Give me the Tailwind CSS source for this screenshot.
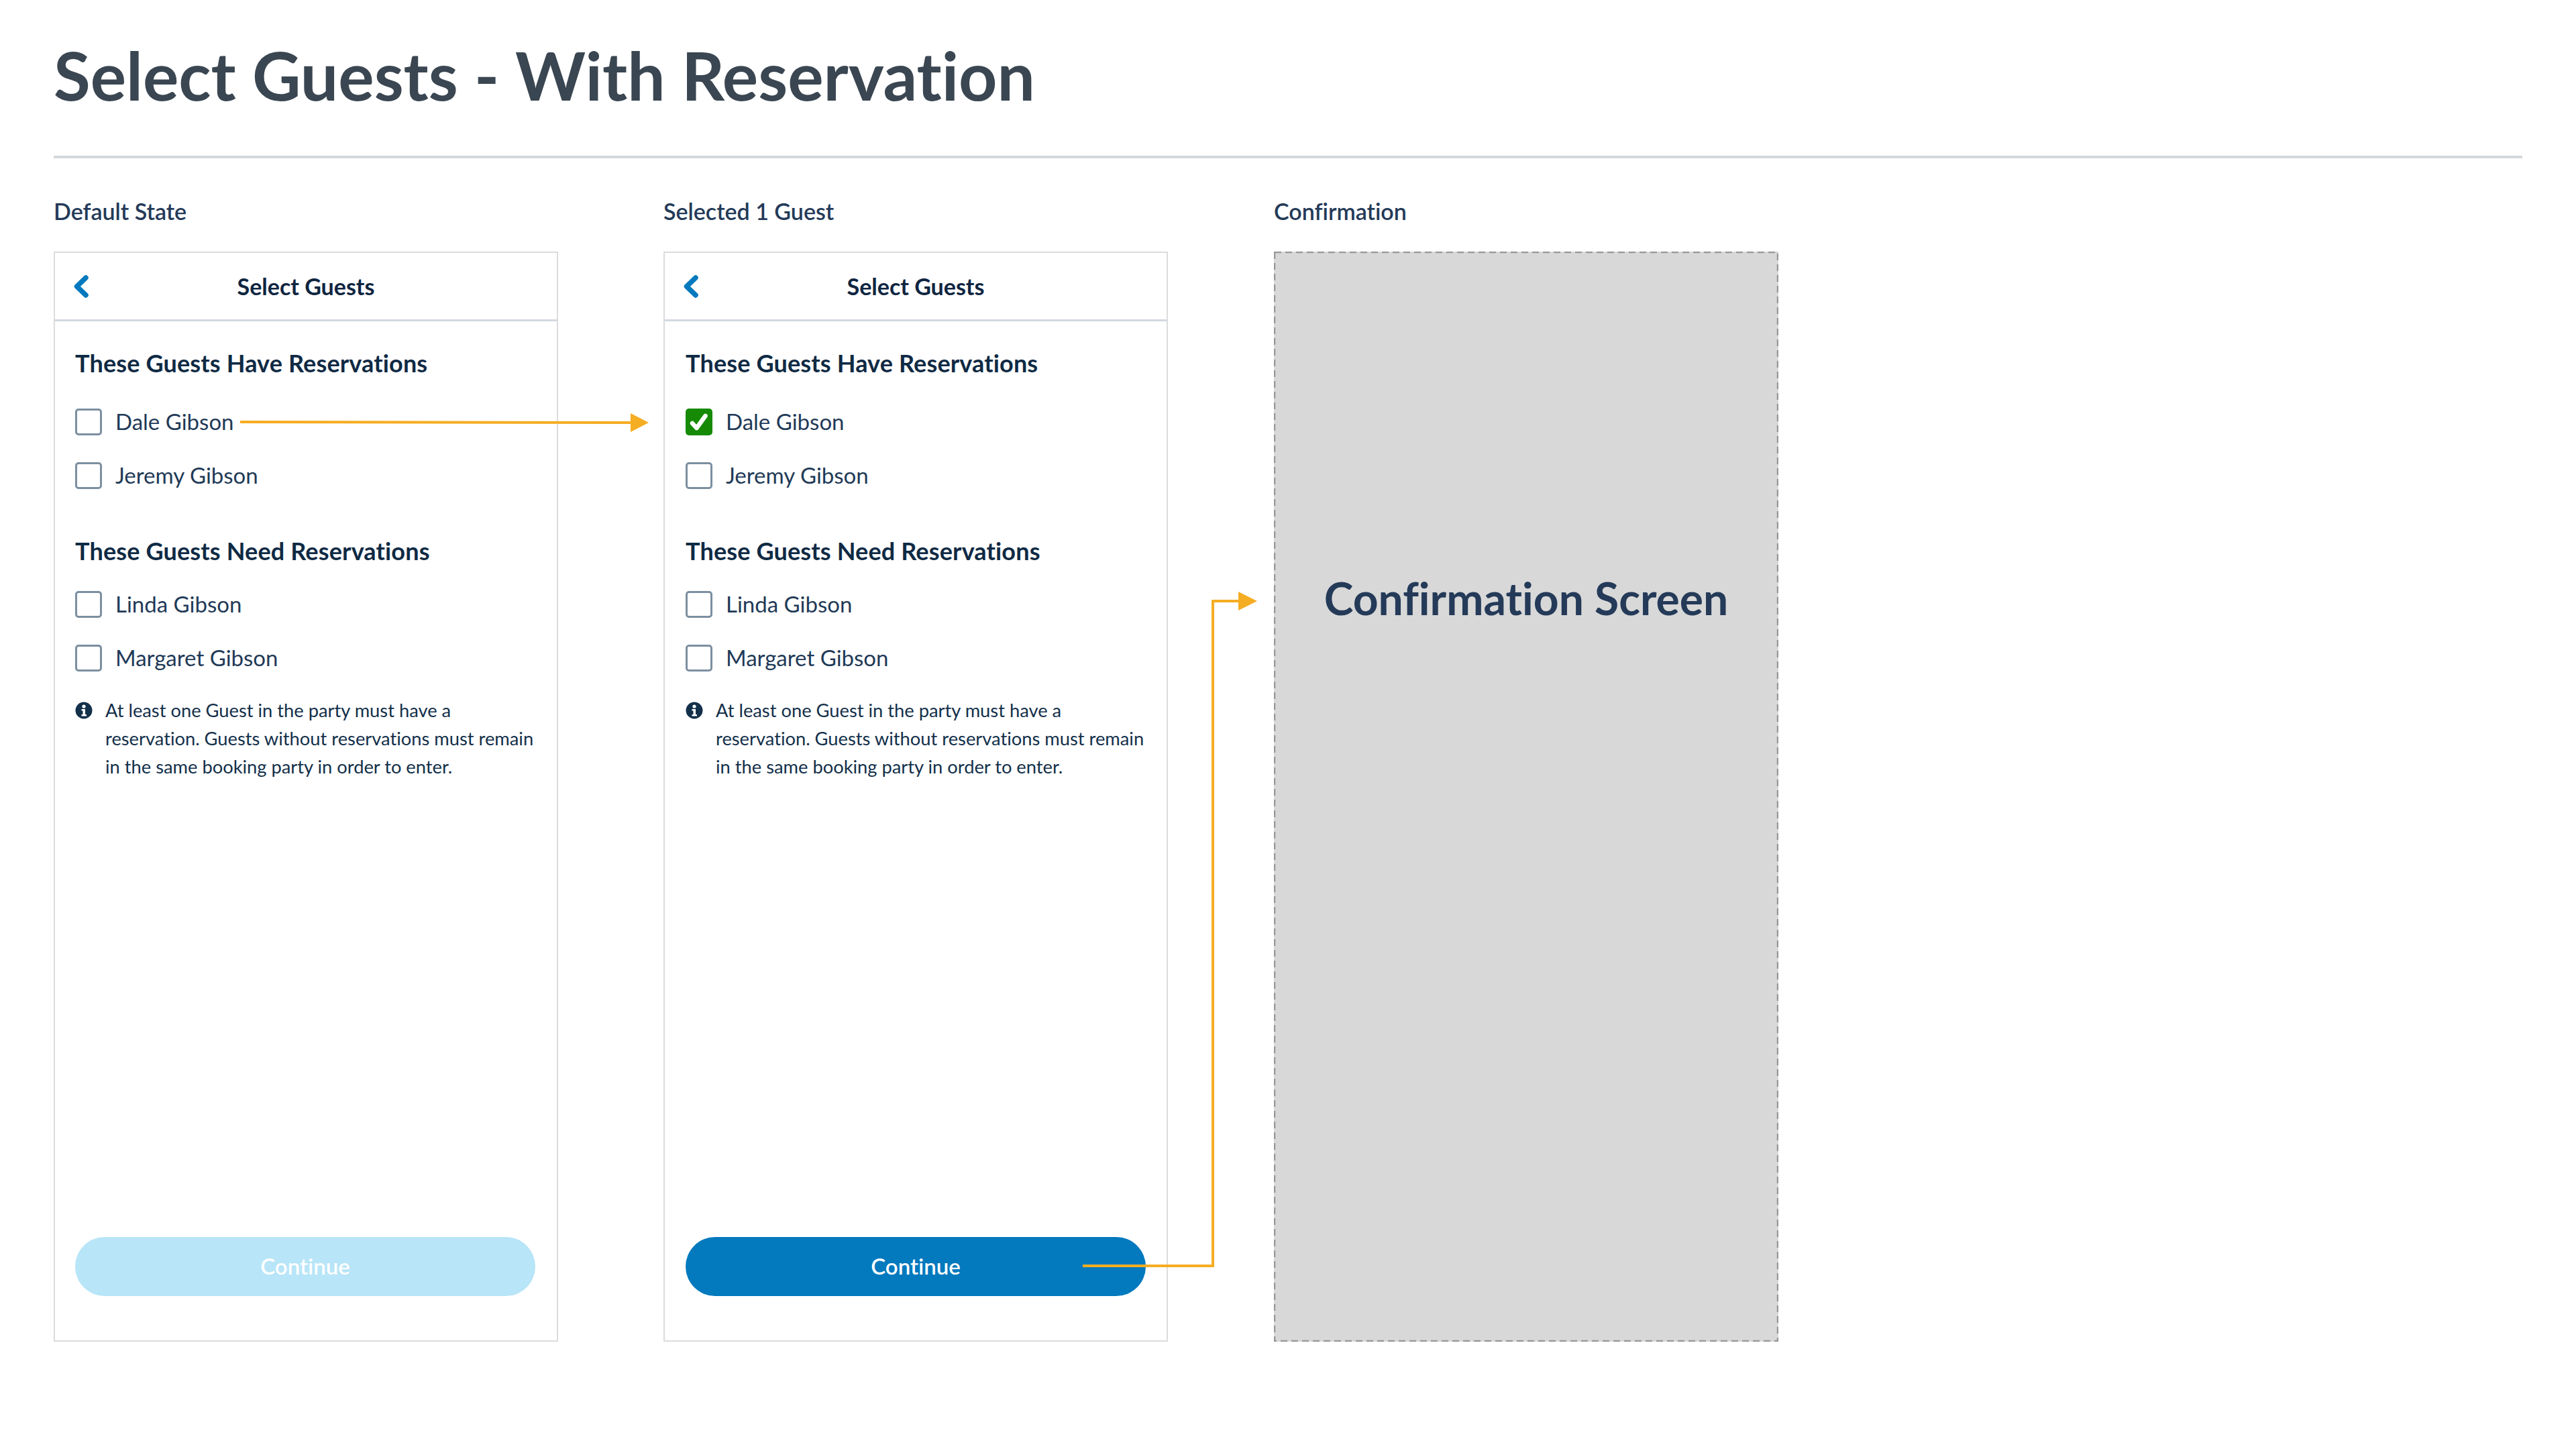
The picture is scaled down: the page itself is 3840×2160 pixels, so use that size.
<!DOCTYPE html>
<html lang="en">
<head>
<meta charset="UTF-8">
<title>Select Guests - With Reservation</title>
<script src="https://cdn.jsdelivr.net/npm/@tailwindcss/browser@4"></script>
</head>
<body class="bg-white font-['Lato',sans-serif] [font-variant-ligatures:none]">
<div class="relative w-[3840px] h-[2160px] px-[80px]">
  <h1 class="h-[232px] pt-[56px] text-[100px] leading-[110px] font-bold text-[#3a4651]">Select Guests - With Reservation</h1>
  <div class="h-[4px] bg-[#d2d8dd]"></div>

  <div class="flex gap-[157px] pt-[59px]">
    <!-- default state -->
    <section class="w-[752px]">
      <h2 class="h-[80px] text-[34px] leading-[40px] font-semibold text-[#243a58]">Default State</h2>
      <div class="w-[752px] h-[1625px] flex flex-col border-2 border-[#dcdcdc]">
        <div class="relative h-[102px] shrink-0 flex items-center justify-center border-b-[3px] border-[#d3d8e0]">
          <svg class="absolute left-[27px] top-[33px]" width="24" height="34" viewBox="0 0 24 34" fill="none"><path d="M19 4 5.500 17 19 30" stroke="#0379be" stroke-width="7.500" stroke-linecap="round" stroke-linejoin="round"/></svg>
          <span class="text-[34px] font-bold text-[#0f2540]">Select Guests</span>
        </div>
        <div class="flex-1 flex flex-col px-[30px]">
          <h3 class="pt-[40px] text-[36px] leading-[44px] font-bold tracking-[0.15px] text-[#0f2a44]">These Guests Have Reservations</h3>
          <div class="flex flex-col gap-[40px] pt-[46px]">
            <label class="flex items-center gap-[20px] h-[40px] text-[33px] text-[#1f3a57]"><span class="w-[40px] h-[40px] rounded-[5px] border-[3px] border-[#7c8fa0]"></span>Dale Gibson</label>
            <label class="flex items-center gap-[20px] h-[40px] text-[33px] text-[#1f3a57]"><span class="w-[40px] h-[40px] rounded-[5px] border-[3px] border-[#7c8fa0]"></span>Jeremy Gibson</label>
          </div>
          <h3 class="pt-[70px] text-[36px] leading-[44px] font-bold tracking-[0.15px] text-[#0f2a44]">These Guests Need Reservations</h3>
          <div class="flex flex-col gap-[40px] pt-[38px]">
            <label class="flex items-center gap-[20px] h-[40px] text-[33px] text-[#1f3a57]"><span class="w-[40px] h-[40px] rounded-[5px] border-[3px] border-[#7c8fa0]"></span>Linda Gibson</label>
            <label class="flex items-center gap-[20px] h-[40px] text-[33px] text-[#1f3a57]"><span class="w-[40px] h-[40px] rounded-[5px] border-[3px] border-[#7c8fa0]"></span>Margaret Gibson</label>
          </div>
          <div class="flex gap-[19px] pt-[37px]">
            <svg class="shrink-0 mt-[8px]" width="26" height="26" viewBox="0 0 26 26"><circle cx="13" cy="13" r="12.5" fill="#13304a"/><circle cx="13" cy="7" r="2.6" fill="#fff"/><path d="M9.500 11h5.500v8h2v2.500H9.500V19h2v-5.500h-2z" fill="#fff"/></svg>
            <p class="text-[27.300px] leading-[42px] text-[#13304a]">At least one Guest in the party must have a<br>reservation. Guests without reservations must remain<br>in the same booking party in order to enter.</p>
          </div>
          <button class="mt-auto mb-[66px] h-[88px] w-[686px] rounded-full bg-[#b8e5f8] text-[33px] font-semibold text-white">Continue</button>
        </div>
      </div>
    </section>

    <!-- selected 1 guest -->
    <section class="w-[752px]">
      <h2 class="h-[80px] text-[34px] leading-[40px] font-semibold text-[#243a58]">Selected 1 Guest</h2>
      <div class="w-[752px] h-[1625px] flex flex-col border-2 border-[#dcdcdc]">
        <div class="relative h-[102px] shrink-0 flex items-center justify-center border-b-[3px] border-[#d3d8e0]">
          <svg class="absolute left-[27px] top-[33px]" width="24" height="34" viewBox="0 0 24 34" fill="none"><path d="M19 4 5.500 17 19 30" stroke="#0379be" stroke-width="7.500" stroke-linecap="round" stroke-linejoin="round"/></svg>
          <span class="text-[34px] font-bold text-[#0f2540]">Select Guests</span>
        </div>
        <div class="flex-1 flex flex-col px-[31px]">
          <h3 class="pt-[40px] text-[36px] leading-[44px] font-bold tracking-[0.15px] text-[#0f2a44]">These Guests Have Reservations</h3>
          <div class="flex flex-col gap-[40px] pt-[46px]">
            <label class="flex items-center gap-[20px] h-[40px] text-[33px] text-[#1f3a57]">
              <span class="w-[40px] h-[40px] rounded-[5px] bg-[#168a05] flex items-center justify-center">
                <svg width="30" height="28" viewBox="0 0 30 28" fill="none"><path d="M5 16l6.500 7L24.500 5" stroke="#fff" stroke-width="6.500" stroke-linecap="round" stroke-linejoin="round"/></svg>
              </span>Dale Gibson</label>
            <label class="flex items-center gap-[20px] h-[40px] text-[33px] text-[#1f3a57]"><span class="w-[40px] h-[40px] rounded-[5px] border-[3px] border-[#7c8fa0]"></span>Jeremy Gibson</label>
          </div>
          <h3 class="pt-[70px] text-[36px] leading-[44px] font-bold tracking-[0.15px] text-[#0f2a44]">These Guests Need Reservations</h3>
          <div class="flex flex-col gap-[40px] pt-[38px]">
            <label class="flex items-center gap-[20px] h-[40px] text-[33px] text-[#1f3a57]"><span class="w-[40px] h-[40px] rounded-[5px] border-[3px] border-[#7c8fa0]"></span>Linda Gibson</label>
            <label class="flex items-center gap-[20px] h-[40px] text-[33px] text-[#1f3a57]"><span class="w-[40px] h-[40px] rounded-[5px] border-[3px] border-[#7c8fa0]"></span>Margaret Gibson</label>
          </div>
          <div class="flex gap-[19px] pt-[37px]">
            <svg class="shrink-0 mt-[8px]" width="26" height="26" viewBox="0 0 26 26"><circle cx="13" cy="13" r="12.5" fill="#13304a"/><circle cx="13" cy="7" r="2.6" fill="#fff"/><path d="M9.500 11h5.500v8h2v2.500H9.500V19h2v-5.500h-2z" fill="#fff"/></svg>
            <p class="text-[27.300px] leading-[42px] text-[#13304a]">At least one Guest in the party must have a<br>reservation. Guests without reservations must remain<br>in the same booking party in order to enter.</p>
          </div>
          <button class="mt-auto mb-[66px] h-[88px] w-[686px] rounded-full bg-[#0379be] text-[33px] font-semibold text-white">Continue</button>
        </div>
      </div>
    </section>

    <!-- confirmation -->
    <section class="w-[752px] ml-px">
      <h2 class="h-[80px] text-[34px] leading-[40px] font-semibold text-[#243a58]">Confirmation</h2>
      <div class="relative w-[752px] h-[1625px] flex justify-center pt-[472px] bg-[#d8d8d8]">
        <svg class="absolute left-0 top-0" width="752" height="1625" viewBox="0 0 752 1625" fill="none"><rect x="1" y="1" width="750" height="1623" stroke="#979797" stroke-width="2.500" stroke-dasharray="10 6"/></svg>
        <span class="text-[66px] leading-[90px] font-bold text-[#243a58]">Confirmation Screen</span>
      </div>
    </section>
  </div>

  <!-- flow arrows over the cards -->
  <svg class="absolute left-0 top-0 pointer-events-none" width="3840" height="2160" viewBox="0 0 3840 2160" fill="none">
    <path d="M358 629L945 630" stroke="#f5ad23" stroke-width="4"/>
    <path d="M940 616l27 14-27 14z" fill="#f5ad23"/>
    <path d="M1614 1887H1808V896H1850" stroke="#f5ad23" stroke-width="4"/>
    <path d="M1846 882l28 14-28 14z" fill="#f5ad23"/>
  </svg>
</div>
</body>
</html>
